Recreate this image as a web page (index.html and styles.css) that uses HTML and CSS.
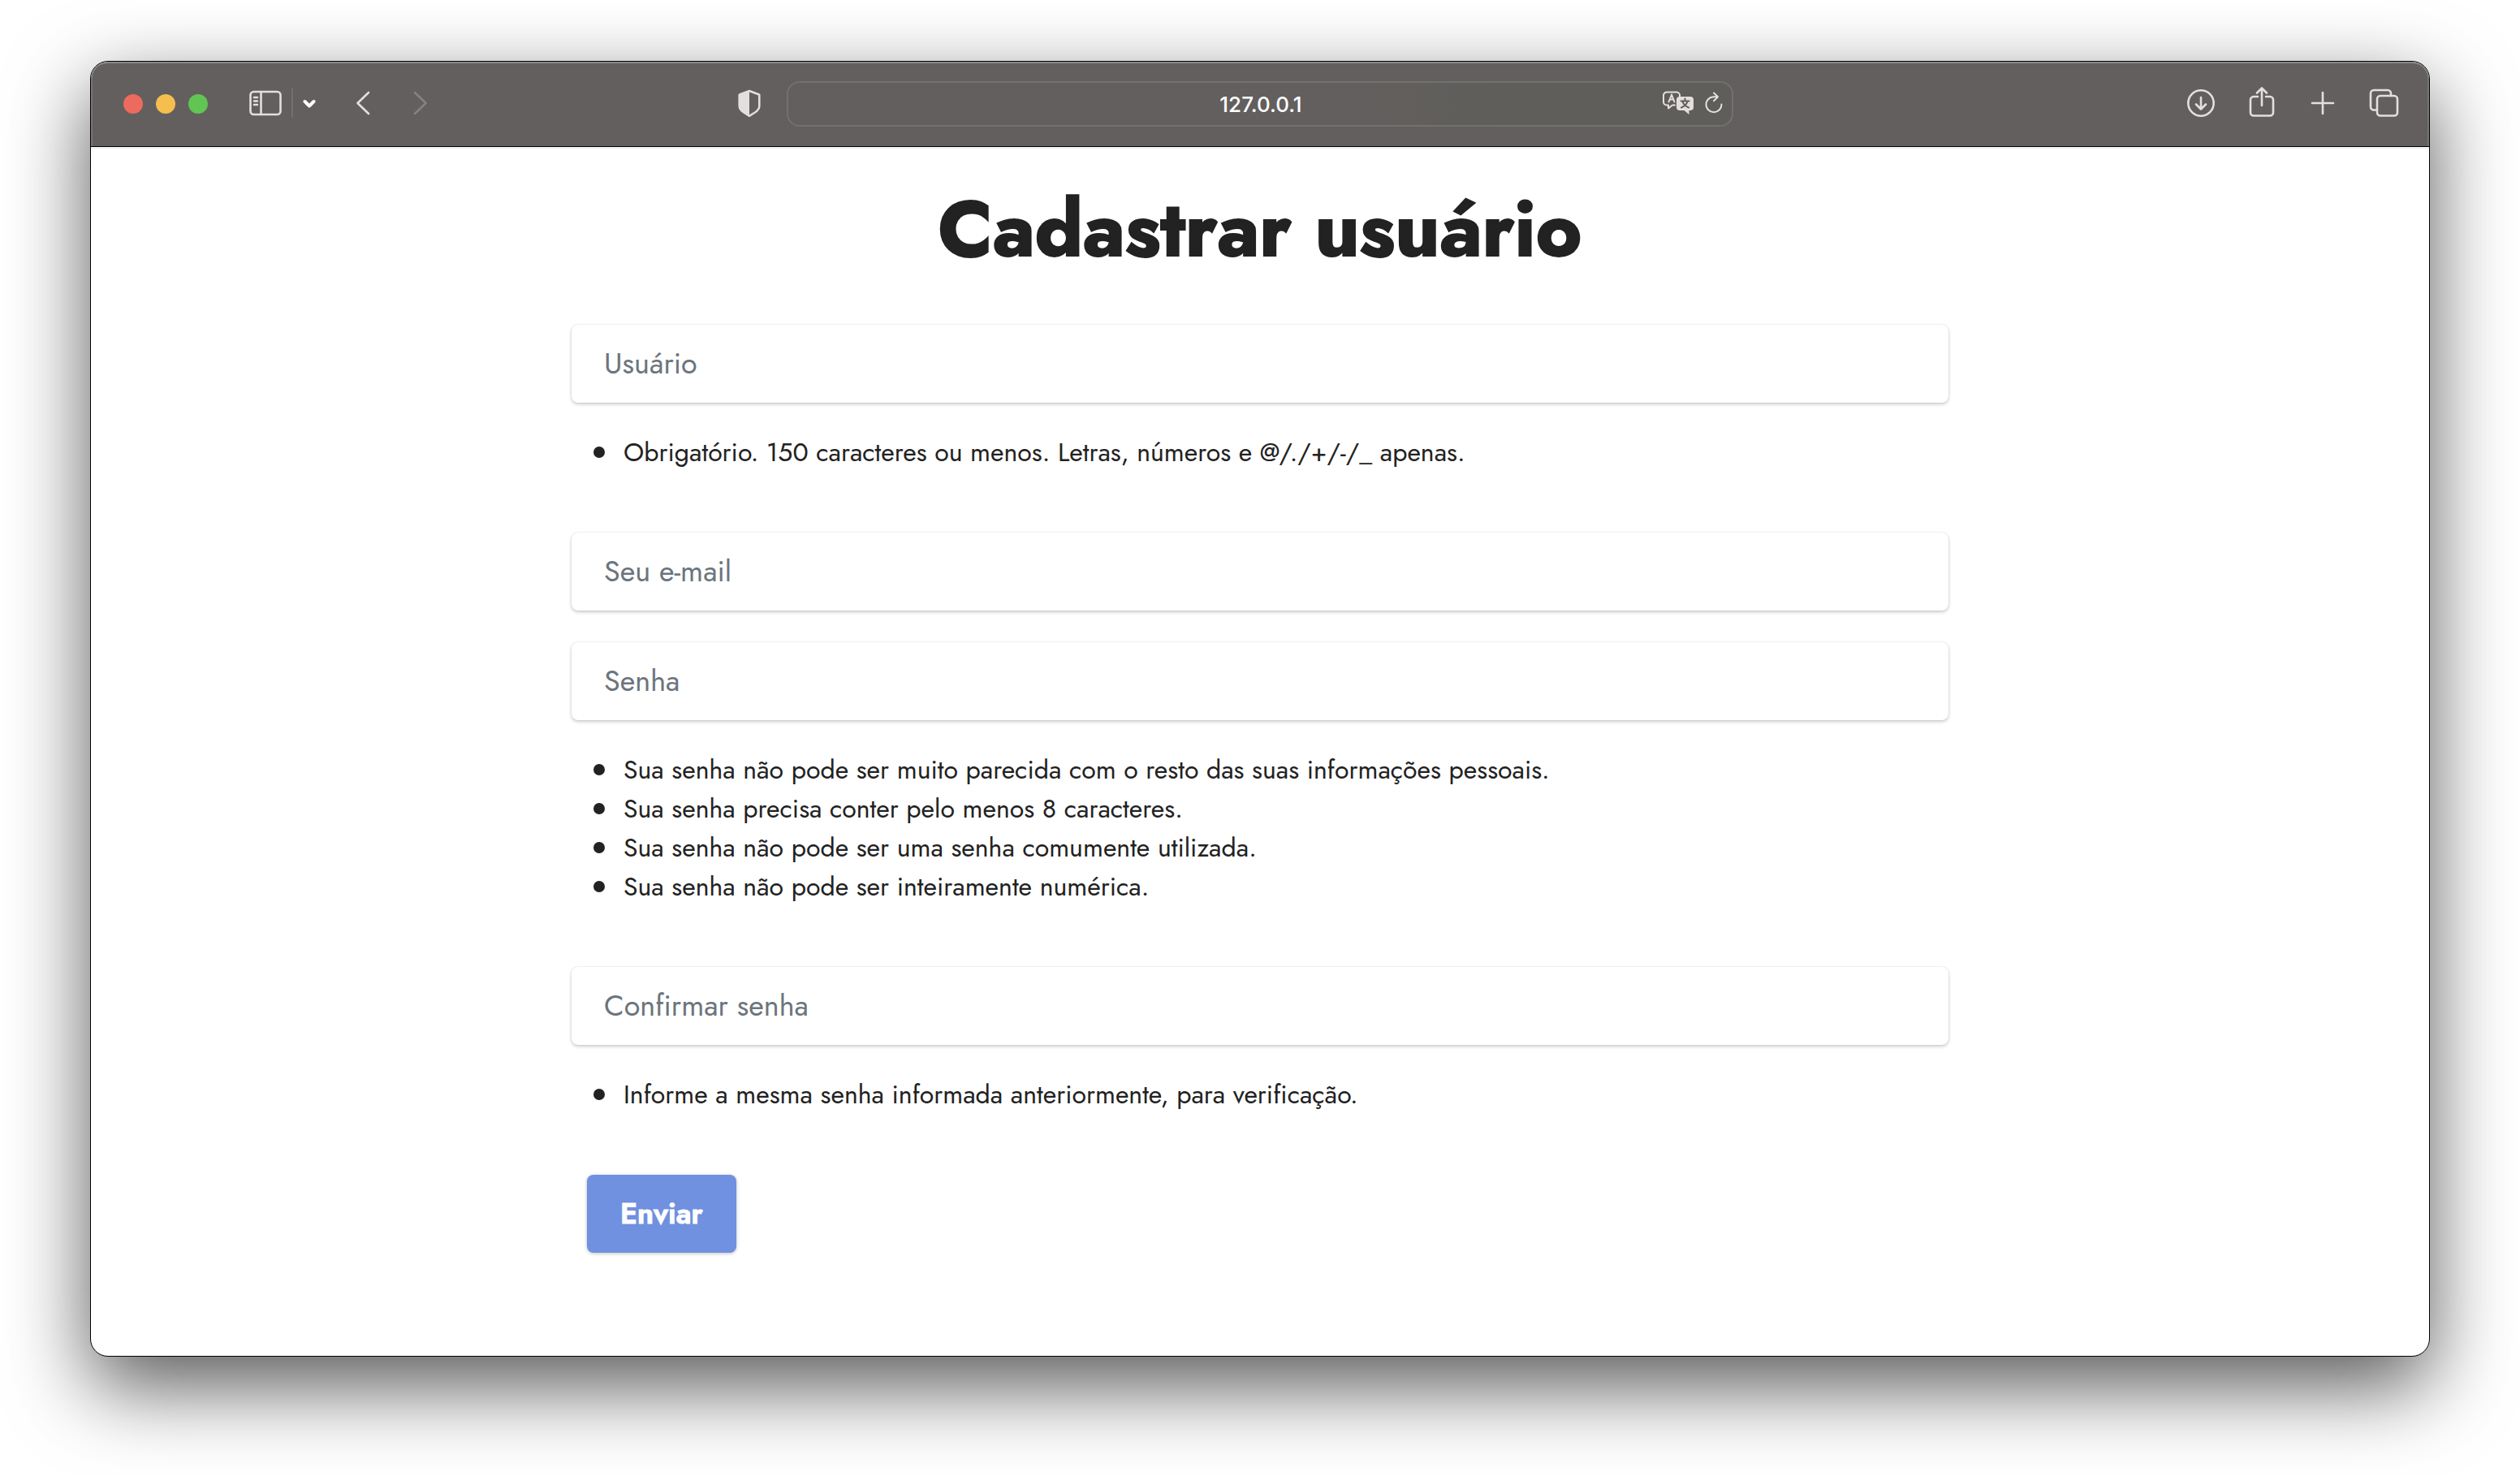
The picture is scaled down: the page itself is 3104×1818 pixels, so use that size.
FILE: index.html
```html
<!DOCTYPE html>
<html lang="pt-BR">
<head>
<meta charset="utf-8">
<meta name="viewport" content="width=device-width, initial-scale=1">
<title>Cadastrar usuário</title>
<link rel="stylesheet" href="styles.css">
</head>
<body>
<div class="window">
  <header class="toolbar">
    <div class="side">
      <div class="lights">
        <button class="light red" aria-label="Fechar"></button>
        <button class="light yellow" aria-label="Minimizar"></button>
        <button class="light green" aria-label="Ampliar"></button>
      </div>
      <div class="sidebar-tools">
        <button class="tool" aria-label="Barra lateral"><svg width="40" height="40" viewBox="0 0 40 40"><rect x="1.500" y="6" width="37" height="28" rx="4"/><path d="M14.500 6v28M6 13h4M6 17.500h4M6 22h4"/></svg></button>
        <span class="divider"></span>
        <button class="tool bright" aria-label="Grupos de abas"><svg width="16" height="40" viewBox="0 0 16 40"><path d="M2.500 18l5.500 5.500 5.500-5.500"/></svg></button>
      </div>
      <div class="history">
        <button class="tool" aria-label="Voltar"><svg width="20" height="40" viewBox="0 0 20 40"><path d="M17 7L3.500 20 17 33"/></svg></button>
        <button class="tool" aria-label="Avançar" disabled><svg width="20" height="40" viewBox="0 0 20 40"><path d="M3 7l13.500 13L3 33"/></svg></button>
      </div>
      <button class="tool shield" aria-label="Privacidade"><svg width="28" height="36" viewBox="0 0 28 36"><path d="M14 3L25.500 7.200a1 1 0 0 1 .8 1.200V22c0 4-3 6.500-12.300 11.800C4.700 28.500 1.700 26 1.700 22V8.400a1 1 0 0 1 .8-1.200z"/><path class="solid" d="M14 3L2 7.500V22c0 4 3 6.500 12 11.500z"/></svg></button>
    </div>
    <div class="address">
      <input class="url" type="text" value="127.0.0.1" aria-label="Endereço">
      <div class="address-tools">
        <button class="tool" aria-label="Traduzir"><svg class="fine" width="40" height="32" viewBox="0 0 40 32"><path d="M16 18.500h-3L8 22.500v-4H6a4 4 0 0 1-4-4v-8a4 4 0 0 1 4-4h12a4 4 0 0 1 4 4V8"/><path d="M8.500 14.500L12 5.500l3.500 9M10 11.500h4"/><path class="solid" d="M22 8h13a4 4 0 0 1 4 4v9a4 4 0 0 1-4 4h-1.500v5l-6-5H22a4 4 0 0 1-4-4v-9a4 4 0 0 1 4-4z"/><path class="ink" d="M28.500 10.500v3M23.500 13.500h10M25.500 14c1 3.500 4 6 7.500 7.500M31.500 14c-1 3.500-4 6-7.500 7.500"/></svg></button>
        <button class="tool" aria-label="Recarregar"><svg class="fine" width="24" height="32" viewBox="0 0 24 32"><path d="M17 8.200H12A9.500 9.500 0 1 0 21.500 17.500M12 3.500l5 4.700-5 5"/></svg></button>
      </div>
    </div>
    <div class="side end">
      <button class="tool" aria-label="Downloads"><svg width="40" height="40" viewBox="0 0 40 40"><circle cx="20" cy="20" r="15.700"/><path d="M20 13v14.500M14 21.500l6 6 6-6"/></svg></button>
      <button class="tool" aria-label="Compartilhar"><svg width="40" height="40" viewBox="0 0 40 40"><path d="M15 12h-5a4 4 0 0 0-4 4v15.500a4 4 0 0 0 4 4h20a4 4 0 0 0 4-4V16a4 4 0 0 0-4-4h-5M20 23V1.500M14 7.500l6-6 6 6"/></svg></button>
      <button class="tool" aria-label="Nova aba"><svg width="40" height="40" viewBox="0 0 40 40"><path d="M20 7v26M7 20h26"/></svg></button>
      <button class="tool" aria-label="Visão geral das abas"><svg width="40" height="40" viewBox="0 0 40 40"><path d="M11 28.500H8a4 4 0 0 1-4-4V8a4 4 0 0 1 4-4h17a4 4 0 0 1 4 4v3"/><rect x="12" y="11" width="25" height="24.500" rx="4"/></svg></button>
    </div>
  </header>
  <main class="page">
    <h1>Cadastrar usuário</h1>
    <form class="form">
      <input class="field" type="text" placeholder="Usuário" aria-label="Usuário">
      <ul class="hints">
        <li>Obrigatório. 150 caracteres ou menos. Letras, números e @/./+/-/_ apenas.</li>
      </ul>
      <input class="field" type="email" placeholder="Seu e-mail" aria-label="Seu e-mail">
      <input class="field" type="password" placeholder="Senha" aria-label="Senha">
      <ul class="hints">
        <li>Sua senha não pode ser muito parecida com o resto das suas informações pessoais.</li>
        <li>Sua senha precisa conter pelo menos 8 caracteres.</li>
        <li>Sua senha não pode ser uma senha comumente utilizada.</li>
        <li>Sua senha não pode ser inteiramente numérica.</li>
      </ul>
      <input class="field" type="password" placeholder="Confirmar senha" aria-label="Confirmar senha">
      <ul class="hints">
        <li>Informe a mesma senha informada anteriormente, para verificação.</li>
      </ul>
      <button class="submit" type="submit">Enviar</button>
    </form>
  </main>
</div>
</body>
</html>
```
FILE: styles.css
```css
* { box-sizing: border-box; }
body {
  margin: 0;
  min-height: 100vh;
  padding: 75px 111px 147px;
  display: flex;
  background: #fff;
  color: #222;
  font-family: Jost, Lato, sans-serif;
}
button, input { font: inherit; margin: 0; }
button { padding: 0; border: 0; background: none; cursor: pointer; }

.window {
  flex: 1;
  min-width: 0;
  display: flex;
  flex-direction: column;
  overflow: hidden;
  border: 1px solid #000;
  border-radius: 22px;
  background: #fff;
  box-shadow: 0 36px 100px rgba(0, 0, 0, .66);
}
.toolbar {
  display: grid;
  grid-template-columns: minmax(0, 1fr) minmax(0, 1166px) minmax(0, 1fr);
  align-items: center;
  height: 105px;
  background: #635f5e;
  border-bottom: 1px solid #000;
  border-radius: 21px 21px 0 0;
  box-shadow: inset 0 2px #8b8985, inset 2px 0 #777573, inset -2px 0 #777573, 0 2px #eef1f1;
}
.side { display: flex; align-items: center; padding-left: 40px; }
.side.end { justify-content: flex-end; gap: 35px; padding: 0 36px 2px 0; }
.lights { display: flex; gap: 16px; margin-right: 51px; }
.light { width: 24px; height: 24px; border-radius: 50%; }
.red { background: #ed6a5e; }
.yellow { background: #f5bf4f; }
.green { background: #61c554; }
.sidebar-tools { display: flex; align-items: center; gap: 12px; margin-right: 48px; padding-bottom: 2px; }
.divider { width: 2px; height: 36px; background: #737070; }
.history { display: flex; gap: 51px; padding-bottom: 2px; }
.tool { display: flex; color: #e3dfdf; }
.tool:disabled { color: #858180; }
.bright { color: #fff; }
.shield { margin: 0 32px 0 auto; padding-bottom: 2px; }
svg { display: block; fill: none; stroke: currentColor; stroke-width: 2.6; stroke-linecap: round; stroke-linejoin: round; }
.fine { stroke-width: 2; }
.bright svg { stroke-width: 4; }
.solid { fill: currentColor; stroke: none; }
.ink { stroke: #605e5b; }

.address {
  display: flex;
  align-items: center;
  height: 56px;
  padding: 0 10px 0 88px;
  border: 2px solid #73706f;
  border-radius: 16px;
  background: linear-gradient(90deg, #635f5e 60%, #5f5e5b 75%);
}
.url {
  flex: 1;
  min-width: 0;
  height: 48px;
  padding: 0;
  border: 0;
  outline: 0;
  background: none;
  color: #fff;
  text-align: center;
  font: 500 26px Inter, sans-serif;
}
.address-tools { display: flex; gap: 12px; padding-bottom: 2px; }

.page {
  width: 100%;
  max-width: 1696px;
  margin: 0 auto;
  padding: 29px 0 124px;
}
h1 {
  margin: 0 0 46px;
  text-align: center;
  font-size: 96px;
  font-weight: 700;
  line-height: 144px;
  -webkit-text-stroke: 2px #222;
}
.form { display: flex; flex-direction: column; align-items: stretch; }
.field {
  width: 100%;
  height: 96px;
  padding: 0 40px 2px;
  border: 0;
  border-radius: 8px;
  background: #fff;
  color: #222;
  font-size: 36px;
  box-shadow: 0 2px 4px rgba(0, 0, 0, .2), 0 0 2px rgba(0, 0, 0, .12);
}
.field::placeholder { color: #6c757d; opacity: 1; }
.field + .field { margin-top: 39px; }
.hints {
  margin: 37px 0 75px;
  padding: 0 0 0 27px;
  list-style: none;
  font-size: 32px;
  line-height: 48px;
}
.hints li { display: flex; align-items: center; gap: 23px; }
.hints li::before { content: ""; flex: none; width: 14px; height: 14px; border-radius: 50%; background: #222; }
.submit {
  align-self: flex-start;
  height: 96px;
  margin-left: 19px;
  padding: 0 41px 2px;
  border-radius: 8px;
  background: #7090e0;
  color: #fff;
  font-size: 36px;
  font-weight: 600;
  -webkit-text-stroke: 1px #fff;
  box-shadow: 0 1px 4px rgba(0, 0, 0, .25);
}
```
